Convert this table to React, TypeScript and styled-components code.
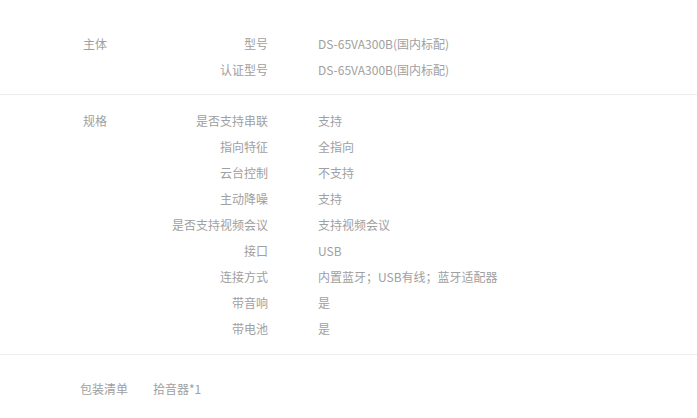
import styled, { createGlobalStyle } from "styled-components";

const GlobalStyle = createGlobalStyle`
    body {
        margin: 0;
        background: #fff;
        font-family: "Noto Sans CJK SC", "Noto Sans", sans-serif;
        font-size: 12px;
        color: #a0a0a0;
    }
`

type Spec = { label: string; value: string }

const sections: { title: string; rows: Spec[] }[] = [
    {
        title: "主体",
        rows: [
            { label: "型号", value: "DS-65VA300B(国内标配)" },
            { label: "认证型号", value: "DS-65VA300B(国内标配)" },
        ],
    },
    {
        title: "规格",
        rows: [
            { label: "是否支持串联", value: "支持" },
            { label: "指向特征", value: "全指向" },
            { label: "云台控制", value: "不支持" },
            { label: "主动降噪", value: "支持" },
            { label: "是否支持视频会议", value: "支持视频会议" },
            { label: "接口", value: "USB" },
            { label: "连接方式", value: "内置蓝牙；USB有线；蓝牙适配器" },
            { label: "带音响", value: "是" },
            { label: "带电池", value: "是" },
        ],
    },
]

function App() {
    return (
        <Page>
            <GlobalStyle />
            {sections.map((s, i) => (
                <Section key={s.title} $first={i === 0}>
                    <GroupTitle>{s.title}</GroupTitle>
                    <Rows>
                        {s.rows.map((r) => (
                            <Row key={r.label}>
                                <Label>{r.label}</Label>
                                <Value>{r.value}</Value>
                            </Row>
                        ))}
                    </Rows>
                </Section>
            ))}
            <Package>
                <PackageLabel>包装清单</PackageLabel>
                <span>拾音器*1</span>
            </Package>
        </Page>
    )
}

export default App

const Page = styled.div`
    width: 697px;
`

const Section = styled.div<{ $first?: boolean }>`
    display: flex;
    padding: ${(p) => (p.$first ? "31px 0 11px" : "13px 0 12px")};
    border-bottom: 1px solid #ececec;
    line-height: 26px;
`

const GroupTitle = styled.div`
    width: 85px;
    padding-left: 83px;
`

const Rows = styled.div`
    display: flex;
    flex-direction: column;
`

const Row = styled.div`
    display: flex;
    gap: 50px;
`

const Label = styled.div`
    width: 100px;
    text-align: right;
`

const Value = styled.div`
    white-space: nowrap;
`

const Package = styled.div`
    display: flex;
    gap: 25px;
    padding: 21px 0 0 80px;
    line-height: 26px;
`

const PackageLabel = styled.span`
    width: 48px;
`
